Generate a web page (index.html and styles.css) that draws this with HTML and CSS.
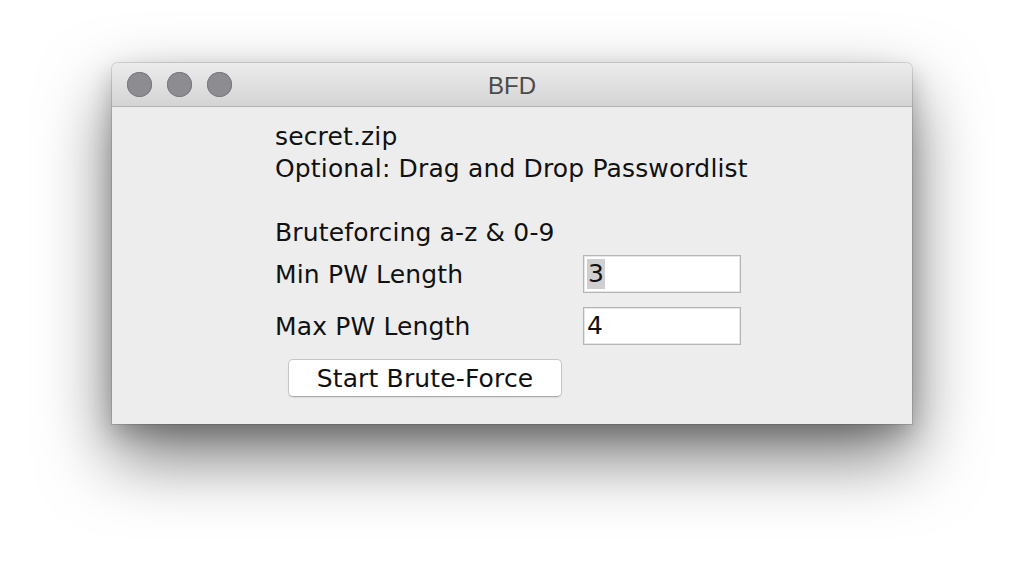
FILE: index.html
```html
<!DOCTYPE html>
<html>
<head>
<meta charset="utf-8">
<link rel="stylesheet" href="styles.css">
</head>
<body>
<div class="window">
  <div class="titlebar">
    <div class="lights">
      <span class="light"></span>
      <span class="light"></span>
      <span class="light"></span>
    </div>
    <div class="title">BFD</div>
  </div>
  <div class="content">
    <div class="line">secret.zip</div>
    <div class="line">Optional: Drag and Drop Passwordlist</div>
    <div class="line blank"></div>
    <div class="line">Bruteforcing a-z &amp; 0-9</div>
    <div class="form">
      <div class="row">
        <span class="label">Min PW Length</span>
        <div class="field"><span class="sel">3</span></div>
      </div>
      <div class="row">
        <span class="label">Max PW Length</span>
        <div class="field">4</div>
      </div>
    </div>
    <button class="btn">Start Brute-Force</button>
  </div>
</div>
</body>
</html>
```
FILE: styles.css
```css
html, body {
  margin: 0;
  padding: 0;
  background: #ffffff;
}
body {
  width: 1024px;
  height: 584px;
  overflow: hidden;
  padding-top: 63px;
  padding-left: 112px;
  box-sizing: border-box;
}
.window {
  width: 800px;
  height: 361px;
  border-radius: 6px 6px 0 0;
  background: #ededed;
  box-shadow: 0 0 0 1px rgba(0,0,0,0.12), 0 32px 70px rgba(0,0,0,0.55), 0 10px 24px rgba(0,0,0,0.2);
  display: flex;
  flex-direction: column;
  overflow: hidden;
}
.titlebar {
  height: 44px;
  flex: none;
  background: linear-gradient(#ececec, #d4d4d4);
  border-bottom: 1px solid #b4b4b4;
  box-sizing: border-box;
  display: flex;
  align-items: center;
  position: relative;
}
.lights {
  display: flex;
  gap: 15px;
  padding-left: 15px;
}
.light {
  width: 25px;
  height: 25px;
  border-radius: 50%;
  background: #8d8c91;
  box-shadow: inset 0 0 0 1px #7a797e;
  box-sizing: border-box;
}
.title {
  position: absolute;
  left: 0;
  right: 0;
  top: 0;
  bottom: 0;
  display: flex;
  align-items: center;
  justify-content: center;
  font-family: "Liberation Sans", Arial, sans-serif;
  font-size: 24px;
  color: #4b4b4b;
  padding-top: 2px;
}
.content {
  padding: 14px 0 0 163px;
  font-family: "DejaVu Sans", sans-serif;
  font-size: 25px;
  letter-spacing: 0.15px;
  color: #111;
  display: flex;
  flex-direction: column;
  align-items: flex-start;
}
.line {
  height: 32px;
  line-height: 32px;
  white-space: nowrap;
}
.form {
  display: flex;
  flex-direction: column;
  gap: 14px;
  margin-top: 6px;
}
.row {
  display: flex;
  align-items: center;
  height: 38px;
}
.label {
  width: 308px;
  white-space: nowrap;
}
.field {
  width: 158px;
  height: 38px;
  box-sizing: border-box;
  background: #ffffff;
  border: 1px solid #b5b5b5;
  box-shadow: inset 0 0 0 1px #e6e6e6;
  padding: 0 3px;
  line-height: 36px;
  display: flex;
  align-items: center;
}
.sel {
  background: #cfcfd2;
  line-height: 30px;
  padding: 0 1px;
}
.btn {
  margin-top: 14px;
  margin-left: 13px;
  width: 274px;
  height: 38px;
  background: #ffffff;
  border: 1px solid #c6c6c6;
  border-bottom-color: #acacac;
  border-radius: 5px;
  box-shadow: 0 1px 1px rgba(0,0,0,0.08);
  font-family: "DejaVu Sans", sans-serif;
  font-size: 25px;
  letter-spacing: 0.15px;
  color: #111;
  padding: 0;
}
```
